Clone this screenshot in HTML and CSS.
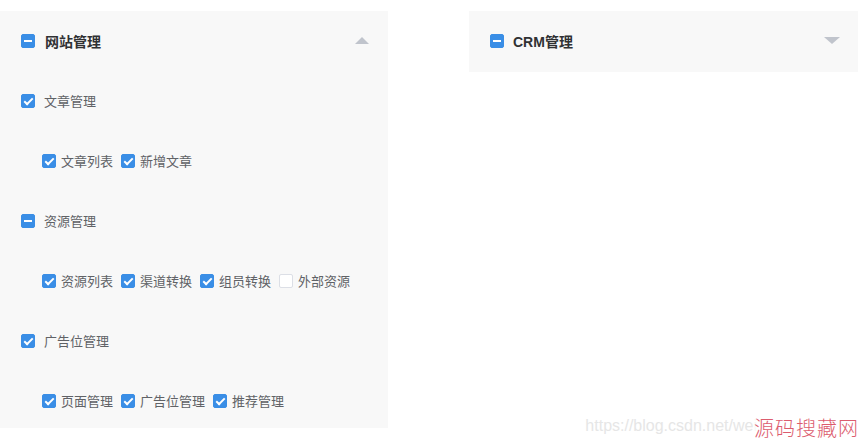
FILE: index.html
```html
<!DOCTYPE html>
<html lang="zh-CN">
<head>
    <meta charset="UTF-8">
    <meta name="viewport" content="width=device-width, initial-scale=1.0">
    <title>权限管理</title>
    <link rel="stylesheet" href="styles.css">
</head>
<body>
    <main class="board">
        <!-- 网站管理 -->
        <section class="panel panel-open">
            <div class="panel-head">
                <span class="box half"></span>
                <span class="head-title">网站管理</span>
                <span class="arrow up"></span>
            </div>

            <div class="row">
                <label class="item"><span class="box on"></span>文章管理</label>
            </div>
            <div class="row sub">
                <label class="item"><span class="box on"></span>文章列表</label>
                <label class="item"><span class="box on"></span>新增文章</label>
            </div>

            <div class="row">
                <label class="item"><span class="box half"></span>资源管理</label>
            </div>
            <div class="row sub">
                <label class="item"><span class="box on"></span>资源列表</label>
                <label class="item"><span class="box on"></span>渠道转换</label>
                <label class="item"><span class="box on"></span>组员转换</label>
                <label class="item"><span class="box"></span>外部资源</label>
            </div>

            <div class="row">
                <label class="item"><span class="box on"></span>广告位管理</label>
            </div>
            <div class="row sub last">
                <label class="item"><span class="box on"></span>页面管理</label>
                <label class="item"><span class="box on"></span>广告位管理</label>
                <label class="item"><span class="box on"></span>推荐管理</label>
            </div>
        </section>

        <!-- CRM管理 -->
        <section class="panel panel-closed">
            <div class="panel-head">
                <span class="box half"></span>
                <span class="head-title crm">CRM管理</span>
                <span class="arrow down"></span>
            </div>
        </section>
    </main>

    <div class="mark">
        <span class="mark-url">https://blog.csdn.net/wei</span>
        <span class="mark-name">源码搜藏网</span>
    </div>
</body>
</html>
```

FILE: styles.css
```css
body {
    margin: 0;
    padding: 0;
    background: #fff;
    font-family: "Liberation Sans", "Noto Sans CJK SC", sans-serif;
    color: #606266;
}
.board {
    display: flex;
    align-items: flex-start;
    gap: 81px;
    padding-top: 11px;
}
.panel {
    background-color: #f8f8f8;
}
.panel-open {
    width: 388px;
}
.panel-closed {
    width: 389px;
}
.panel-head {
    display: flex;
    align-items: center;
    box-sizing: border-box;
    height: 61px;
    padding: 0 18px 2px 21px;
}
.panel-open .panel-head {
    height: 60px;
    padding-bottom: 1px;
}
.head-title {
    flex: 1;
    margin-left: 10px;
    font-size: 14px;
    font-weight: bold;
    color: #303133;
}
.head-title.crm {
    margin-left: 9px;
}
.arrow {
    width: 0;
    height: 0;
    border-left: 7px solid transparent;
    border-right: 7px solid transparent;
}
.arrow.up {
    border-bottom: 7px solid #c0c4cc;
    margin-right: 1px;
}
.arrow.down {
    border-left-width: 8px;
    border-right-width: 8px;
    border-top: 7px solid #c0c4cc;
}
.row {
    display: flex;
    align-items: center;
    height: 60px;
    padding-left: 21px;
}
.row.sub {
    padding-left: 42px;
}
.row.last {
    height: 57px;
    padding-bottom: 3px;
    box-sizing: border-box;
    align-items: flex-start;
    padding-top: 21px;
}
.item {
    display: flex;
    align-items: center;
    margin-right: 8px;
    font-size: 13px;
    line-height: 18px;
    color: #606266;
    font-family: "Noto Sans CJK SC", sans-serif;
}
.row:not(.sub) .item .box {
    margin-right: 9px;
}
.box {
    position: relative;
    box-sizing: border-box;
    width: 14px;
    height: 14px;
    margin-right: 5px;
    border: 1px solid #dcdfe6;
    border-radius: 2px;
    background-color: #fff;
    flex-shrink: 0;
}
.box.on,
.box.half {
    background-color: #3a8ee6;
    border-color: #3a8ee6;
}
/* 勾 */
.box.on::after {
    content: "";
    position: absolute;
    left: 4px;
    top: 1px;
    width: 3px;
    height: 7px;
    border: 2px solid #fff;
    border-left: 0;
    border-top: 0;
    transform: rotate(45deg);
}
/* 半选 */
.box.half::after {
    content: "";
    position: absolute;
    left: 2px;
    right: 2px;
    top: 5px;
    height: 2px;
    background-color: #fff;
}
.panel-head .box {
    margin-right: 0;
}
.mark {
    position: absolute;
    right: 6px;
    top: 413px;
    display: flex;
    align-items: center;
}
.mark-url {
    font-family: "Liberation Sans", sans-serif;
    font-size: 16px;
    color: #e6e6e6;
    margin-right: -3px;
    margin-top: -3px;
}
.mark-name {
    font-family: "Noto Sans CJK SC", serif;
    font-size: 20px;
    font-weight: 300;
    color: #dc5c6e;
    background: rgba(255, 255, 255, 0.7);
    letter-spacing: 1px;
}
```
